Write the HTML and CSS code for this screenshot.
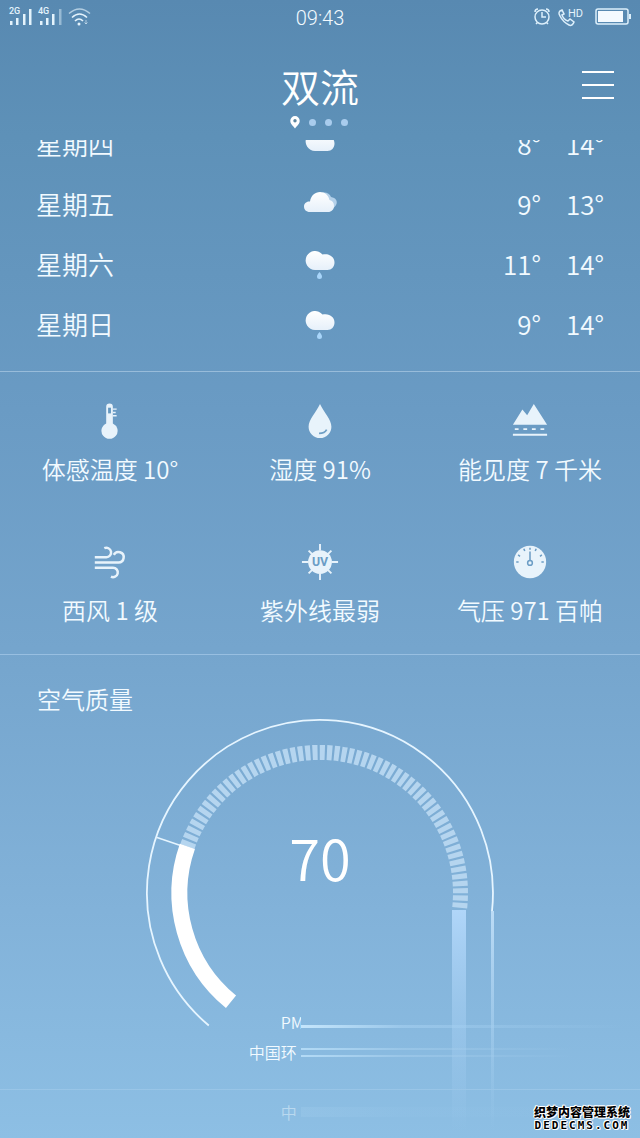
FILE: index.html
```html
<!DOCTYPE html>
<html lang="zh-CN">
<head>
<meta charset="utf-8">
<meta name="viewport" content="width=device-width, initial-scale=1">
<title>双流</title>
<link rel="stylesheet" href="styles.css">
</head>
<body>
<svg class="defs" aria-hidden="true">
  <defs>
    <linearGradient id="cloudFill" x1="0" y1="0" x2="0" y2="1"><stop offset="0" stop-color="#fff"/><stop offset="1" stop-color="#e6f0fa"/></linearGradient>
    <symbol id="overcast" viewBox="0 0 40 40">
      <path d="M15 26a9.500 9.500 0 1 1 7.500-15.500c7-1.500 12 2.500 12 8 0 4.500-3 7.500-7 7.500z" fill="url(#cloudFill)"/>
    </symbol>
    <symbol id="rain" viewBox="0 0 40 40">
      <path d="M15 25a9.500 9.500 0 1 1 7.500-15.500c7-1.500 12 2.500 12 8 0 4.500-3 7.500-7 7.500z" fill="url(#cloudFill)"/>
      <path d="M19.500 27c1.500 2 2.500 3 2.500 4.500a2.500 2.500 0 0 1-5 0c0-1.500 1-2.500 2.500-4.500z" fill="#a8d5fa"/>
    </symbol>
    <symbol id="cloudy" viewBox="0 0 40 40">
      <path d="M17 12c3-6 12-6 14 0 5 1 6.500 4 5.500 7-1 3-4 5-7 5z" fill="#b4d1ea"/>
      <path d="M10 27c-4 0-6-2.500-6-5.500s2.500-5.500 6-5c1-6 5-9.500 10-9.500s8.500 3.500 9.500 8c3 .5 4.500 3 4.500 6 0 3.500-2.500 6-6 6z" fill="url(#cloudFill)"/>
    </symbol>
  </defs>
</svg>
<main class="screen">
  <div class="status">
    <div class="status-side">
      <svg width="94" height="20" viewBox="0 0 94 20" role="img" aria-label="信号">
        <g fill="#e4f3fc">
          <text x="9" y="8" class="net">2G</text><text x="38" y="8" class="net">4G</text>
          <path d="M10 15h2.500v4H10zM16 12h2.500v7H16zM23 8h2.500v11H23zM29 3h2.500v16H29zM40 15h2.500v4H40zM46 12h2.500v7H46zM52 8h2.500v11H52z"/>
          <path d="M59 3h2.500v16H59z" opacity=".45"/>
          <circle cx="79" cy="18" r="1.500"/>
        </g>
        <g fill="none" stroke="#e4f3fc" stroke-width="1.600"><path d="M69 7.500q10.500-9 21 0" opacity=".65"/><path d="M72 11.500q7.500-7 15 0M75 15q4-4 8 0"/><path d="M86 14v4m-1.500-1.500 1.500 1.500 1.500-1.500" stroke-width="1" opacity=".6"/></g>
      </svg>
    </div>
    <time>09:43</time>
    <div class="status-side right">
      <svg width="100" height="22" viewBox="0 0 100 22" role="img" aria-label="闹钟、高清通话、电池">
        <g fill="none" stroke="#dceffb" stroke-width="1.500">
          <circle cx="10" cy="12" r="7"/><path d="M10 7v5h4M3 7a3 3 0 0 1 3-3M14 4a3 3 0 0 1 3 3M5.500 17.500 4 19M14.500 17.500 16 19"/>
          <path d="M30 5c-3 1-4 3-2 6 2 4 5 7 9 9 2 1 4 0 5-3l-4-3-2 2c-3-1-5-3-6-6l2-1z"/>
          <rect x="64" y="4" width="32" height="15" rx="2"/><path d="M98 9v5" stroke-width="2"/>
        </g>
        <rect x="66" y="6" width="25" height="11" fill="#f4faff"/>
        <text x="36" y="12" class="hd">HD</text>
      </svg>
    </div>
  </div>

  <header class="header">
    <h1>双流</h1>
    <div class="pager">
      <svg width="10" height="13" viewBox="0 0 10 13"><path d="M5 0a4.700 4.700 0 0 1 4.700 4.700C9.700 8 7 9.500 5 12.500 3 9.500.3 8 .3 4.700A4.700 4.700 0 0 1 5 0z" fill="#fff"/><circle cx="5" cy="4.700" r="1.700" fill="#5d86a0"/></svg>
      <i></i><i></i><i></i>
    </div>
    <button class="menu" type="button" aria-label="菜单"><span></span><span></span><span></span></button>
  </header>

  <section class="forecast">
    <table>
      <tbody>
        <tr><td>星期四</td><td class="sky"><svg><use href="#overcast"/></svg></td><td class="low">8°</td><td class="high">14°</td></tr>
        <tr><td>星期五</td><td class="sky"><svg><use href="#cloudy"/></svg></td><td class="low">9°</td><td class="high">13°</td></tr>
        <tr><td>星期六</td><td class="sky"><svg><use href="#rain"/></svg></td><td class="low">11°</td><td class="high">14°</td></tr>
        <tr><td>星期日</td><td class="sky"><svg><use href="#rain"/></svg></td><td class="low">9°</td><td class="high">14°</td></tr>
      </tbody>
    </table>
  </section>

  <section class="details">
    <div class="detail">
      <svg viewBox="0 0 40 40"><path d="M16 5a3.500 3.500 0 0 1 7 0v17.500a8.500 8.500 0 1 1-7 0z" fill="#e8f3fb"/><path d="M18 6h3v6h-3z" fill="#6497bf"/><path d="M23 7.500h4M23 11h3M23 14.500h4" stroke="#e8f3fb" stroke-width="1.500"/></svg>
      <span>体感温度 10°</span>
    </div>
    <div class="detail">
      <svg viewBox="0 0 40 40"><path d="M20 2c4 9 12 16 12 24a12 12 0 0 1-24 0c0-8 8-15 12-24z" fill="#e8f3fb"/><path d="M19 33q6 0 8-4" fill="none" stroke="#6f9fc5" stroke-width="1.800"/></svg>
      <span>湿度 91%</span>
    </div>
    <div class="detail">
      <svg viewBox="0 0 40 40"><path d="M2 24 12 8l5 6 7-12 14 22z" fill="#e8f3fb"/><path d="M4 28.500h4m5 0h4m5 0h4m5 0h4" stroke="#e8f3fb" stroke-width="2"/><path d="M2 34.500h36" stroke="#e8f3fb" stroke-width="2"/></svg>
      <span>能见度 7 千米</span>
    </div>
    <div class="detail">
      <svg viewBox="0 0 40 40" fill="none" stroke="#e8f3fb" stroke-width="2.600"><path d="M4 15h12a5 5 0 1 0-2-9.500M4 20.500h25a5.500 5.500 0 1 0-5-8M4 26h19a5 5 0 1 1-2 9.500"/></svg>
      <span>西风 1 级</span>
    </div>
    <div class="detail">
      <svg viewBox="0 0 40 40"><circle cx="20" cy="20" r="12.500" fill="#e8f3fb"/><path d="M20 1v7M20 32v7M1 20h7M32 20h7M8 8l4 4M28 28l4 4M32 8l-4 4M12 28l-4 4" stroke="#e8f3fb" stroke-width="2"/><text x="20" y="24.500" text-anchor="middle" class="uv">UV</text></svg>
      <span>紫外线最弱</span>
    </div>
    <div class="detail">
      <svg viewBox="0 0 40 40"><circle cx="20" cy="20" r="17" fill="#e8f3fb"/><g fill="none" stroke="#6c9dc5" stroke-width="1.600"><circle cx="20" cy="21" r="2.500"/><path d="M20 18.500V9M20 7V5M14.500 8.500l-1-2.500M25.500 8.500l1-2.500M9.500 14l-2-1.500M30.500 14l2-1.500M8 20H5.500M32 20h2.500"/></g></svg>
      <span>气压 971 百帕</span>
    </div>
  </section>

  <section class="air">
    <h2>空气质量</h2>
    <div class="gauge">
      <svg viewBox="0 0 640 424" role="img" aria-label="空气质量指数 70">
        <defs>
          <linearGradient id="band" x1="0" y1="0" x2="0" y2="1"><stop offset="0" stop-color="#b0d6f9"/><stop offset=".45" stop-color="#a2ccf0" stop-opacity=".65"/><stop offset="1" stop-color="#a2ccf0" stop-opacity="0"/></linearGradient>
          <linearGradient id="trail" x1="0" y1="0" x2="0" y2="1"><stop offset="0" stop-color="#bcdcf6"/><stop offset="1" stop-color="#a8d2f2" stop-opacity="0"/></linearGradient>
        </defs>
        <g fill="none">
          <path d="M208.800 311.500A173 173 0 1 1 492 197" stroke="#e6f5ff" stroke-width="1.800"/>
          <path d="M157 123.500 182 132" stroke="#e6f5ff" stroke-width="1.500"/>
          <path d="M187.400 132.400A140.500 140.500 0 0 1 459.700 193.700" pathLength="567" stroke="#b5d5ef" stroke-width="15" stroke-dasharray="7 3"/>
          <path d="M231 287.800A140.500 140.500 0 0 1 187.400 132.400" stroke="#fff" stroke-width="16"/>
        </g>
        <rect x="452" y="196" width="14" height="222" fill="url(#band)"/>
        <rect x="491" y="197" width="3" height="220" fill="url(#trail)"/>
      </svg>
      <strong>70</strong>
    </div>
    <div class="notes">
      <div class="note pm"><span>PM</span><i></i></div>
      <div class="note source"><span>中国环</span><i></i></div>
      <div class="note footer"><span>中</span><i></i></div>
    </div>
  </section>
  <div class="watermark"><b>织梦内容管理系统</b><span>DEDECMS.COM</span></div>
</main>
</body>
</html>
```
FILE: styles.css
```css
* { box-sizing: border-box; }
body {
  margin: 0;
  color: #f2faff;
  font-family: "Noto Sans CJK SC", sans-serif;
  font-weight: 350;
  background: #8dbfe4;
}
.defs { position: absolute; width: 0; height: 0; }
.screen {
  position: relative;
  min-height: 100vh;
  overflow: hidden;
  background: linear-gradient(#5889b1 0%, #5e91b8 12%, #6a9bc4 36%, #75a5cd 57%, #82b2d9 80%, #8dbfe4 100%);
}
.status {
  display: grid;
  grid-template-columns: 1fr auto 1fr;
  align-items: center;
  height: 36px;
  font-family: Roboto, sans-serif;
}
.status time { font-size: 20px; line-height: 36px; }
.status-side { display: flex; align-items: center; height: 32px; }
.status-side svg { display: block; margin-bottom: 4px; }
.status-side.right { justify-content: flex-end; padding-right: 8px; }
.net { font-size: 9px; font-weight: 500; }
.hd { font-size: 11px; fill: #e4f3fc; font-weight: 400; }

.header {
  position: relative;
  display: flex;
  flex-direction: column;
  align-items: center;
  height: 104px;
  padding-top: 22px;
}
.header h1 { margin: 0 0 3px; font-size: 39px; line-height: 54px; font-weight: 350; color: #fff; }
.pager { display: flex; align-items: center; gap: 9px; height: 14px; padding-right: 2px; }
.pager i { width: 7px; height: 7px; border-radius: 50%; background: #a9cced; }
.menu {
  position: absolute;
  top: 32px;
  right: 24px;
  display: flex;
  flex-direction: column;
  justify-content: space-between;
  width: 36px;
  height: 34px;
  padding: 3px 2px;
  border: 0;
  background: none;
}
.menu span { height: 2px; background: #fff; }

.forecast {
  height: 232px;
  overflow: hidden;
  border-bottom: 1px solid #98bcda;
}
.forecast table {
  width: 100%;
  margin-top: -25px;
  border-collapse: collapse;
  table-layout: fixed;
  font-size: 26px;
}
.forecast tr { height: 60px; }
.forecast td { padding: 0 0 2px 36px; line-height: 40px; }
.forecast .sky { width: 20%; padding: 0; text-align: center; }
.sky svg { display: block; width: 40px; height: 40px; margin: 0 auto; }
.forecast .low { width: 25%; padding: 0 3px 2px 0; text-align: right; }
.forecast .high { width: 15%; padding: 0 36px 2px 0; text-align: right; }
.forecast td:first-child { width: 40%; }

.details {
  display: grid;
  grid-template-columns: repeat(3, 1fr);
  padding: 20px 5px 0;
  height: 283px;
  border-bottom: 1px solid #98bfe1;
}
.detail { display: flex; flex-direction: column; align-items: center; gap: 12px; height: 141px; padding-top: 10px; }
.detail svg { width: 38px; height: 38px; }
.detail span { font-size: 24px; line-height: 34px; white-space: nowrap; }
.uv { font-family: Roboto, sans-serif; font-size: 13px; font-weight: 700; fill: #6b9dc6; }

.air { padding-top: 27px; }
.air h2 { margin: 0 0 0 37px; font-size: 24px; line-height: 34px; font-weight: 350; }
.gauge { display: grid; justify-items: center; height: 290px; margin-top: -2px; }
.gauge svg { grid-area: 1 / 1; width: 100%; max-width: 640px; height: 424px; }
.gauge strong { grid-area: 1 / 1; margin-top: 108px; font-size: 56px; line-height: 70px; font-weight: 350; color: #fff; }
.notes { display: grid; gap: 4px; padding-top: 5px; }
.note { display: grid; grid-template-columns: 47% 1fr; height: 26px; line-height: 26px; font-size: 16px; }
.note span { justify-self: end; overflow: hidden; white-space: nowrap; padding-right: 4px; }
.note i { height: 3px; margin-top: 16px; background: linear-gradient(90deg, #c5e6fc, #a5d0f199 30%, transparent 95%); }
.note.pm span { width: 20px; padding: 0; }
.source i {
  height: 9px;
  margin-top: 9px;
  background: none;
  border: solid transparent;
  border-width: 2px 0;
  border-image: linear-gradient(90deg, #b4dbf6, #a4cdec99 30%, transparent 80%) 2;
}
.footer { margin-top: 20px; padding-top: 9px; height: 40px; border-top: 1px solid #99c5e7; }
.footer span { opacity: .45; }
.footer i { height: 10px; margin-top: 8px; opacity: .12; }
.watermark {
  position: absolute;
  right: 10px;
  bottom: 6px;
  display: grid;
  justify-items: center;
  color: #000;
  text-shadow: 1px 0 #fff, -1px 0 #fff, 0 1px #fff, 0 -1px #fff, 1px 1px #fff, -1px -1px #fff;
}
.watermark b { font: 900 12px/16px "Noto Sans CJK SC", sans-serif; }
.watermark span { font: 700 11px/12px "DejaVu Sans Mono", monospace; letter-spacing: 2px; }
```
